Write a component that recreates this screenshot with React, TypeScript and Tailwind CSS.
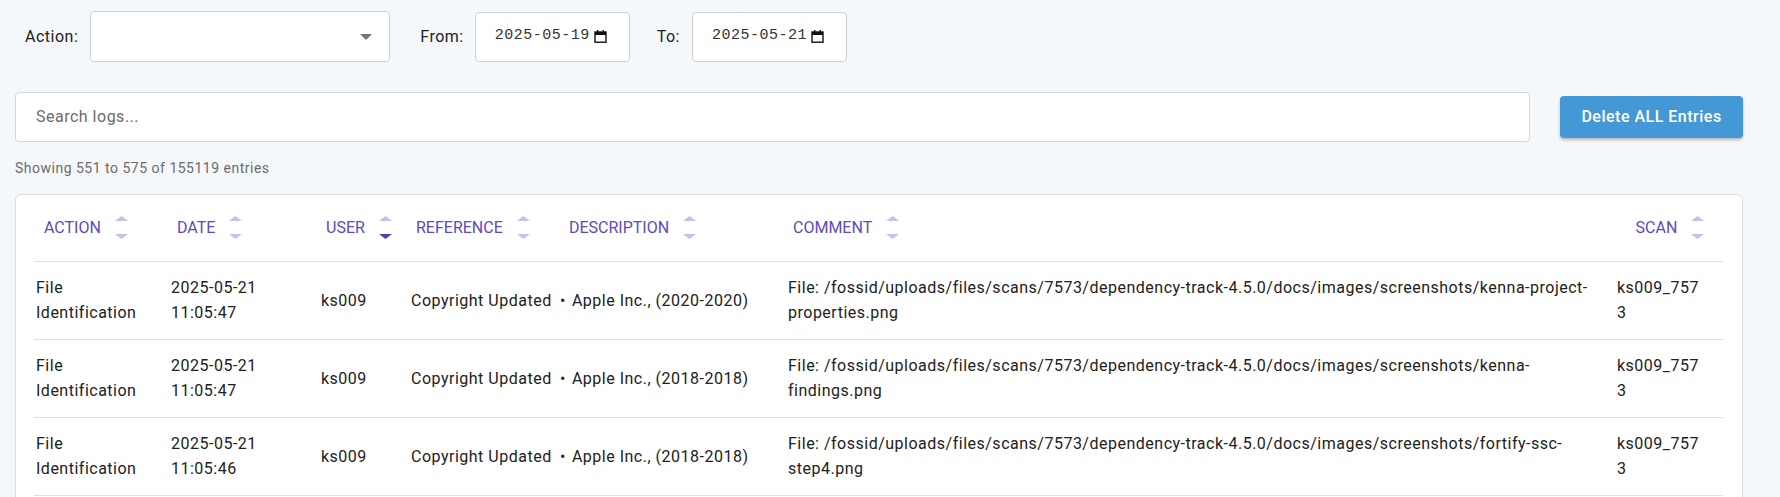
import React from 'react';

type Row = {
  action: string[];
  date: string;
  time: string;
  user: string;
  reference: string;
  description: string;
  comment: string;
  scan: string;
};

const base = 'File: /fossid/uploads/files/scans/7573/dependency-track-4.5.0/docs/images/screenshots/';

const rows: Row[] = [
  {
    action: ['File', 'Identification'],
    date: '2025-05-21',
    time: '11:05:47',
    user: 'ks009',
    reference: 'Copyright Updated',
    description: 'Apple Inc., (2020-2020)',
    comment: base + 'kenna-project-properties.png',
    scan: 'ks009_7573',
  },
  {
    action: ['File', 'Identification'],
    date: '2025-05-21',
    time: '11:05:47',
    user: 'ks009',
    reference: 'Copyright Updated',
    description: 'Apple Inc., (2018-2018)',
    comment: base + 'kenna-findings.png',
    scan: 'ks009_7573',
  },
  {
    action: ['File', 'Identification'],
    date: '2025-05-21',
    time: '11:05:46',
    user: 'ks009',
    reference: 'Copyright Updated',
    description: 'Apple Inc., (2018-2018)',
    comment: base + 'fortify-ssc-step4.png',
    scan: 'ks009_7573',
  },
];

const headers = [
  { label: 'ACTION', cls: 'w-[134px] pl-[10px]' },
  { label: 'DATE', cls: 'w-[149px] pl-[9px]' },
  { label: 'USER', cls: 'w-[90px] pl-[9px]', active: true },
  { label: 'REFERENCE', cls: 'w-[149px] pl-[9px]' },
  { label: 'DESCRIPTION', cls: 'w-[228px] pl-[13px]' },
  { label: 'COMMENT', cls: 'w-[829px] pl-[9px]' },
  { label: 'SCAN', cls: 'w-[110px] pl-[4px]', center: true },
];

function SortIcon({ active }: { active?: boolean }) {
  return (
    <svg width="13" height="23" viewBox="0 0 13 23" className="ml-[14px] shrink-0">
      <polygon points="0,5 6.5,0 13,5" fill="#c9bfe8" />
      <polygon points="0,18 13,18 6.5,23" fill={active ? '#5a3ea6' : '#c9bfe8'} />
    </svg>
  );
}

function CalendarIcon() {
  return (
    <svg width="13" height="13" viewBox="0 0 13 13" className="ml-[4px]">
      <rect x="1" y="2" width="11" height="10.2" fill="none" stroke="#111" strokeWidth="1.4" />
      <rect x="1" y="2" width="11" height="3" fill="#111" />
      <rect x="3" y="0" width="1.4" height="2.5" fill="#111" />
      <rect x="8.6" y="0" width="1.4" height="2.5" fill="#111" />
    </svg>
  );
}

function DateBox({ value }: { value: string }) {
  return (
    <div className="flex h-[50px] w-[155px] items-center rounded-[4px] border border-[#cfcfcf] bg-white pl-[19px]">
      <span className="font-['Liberation_Mono',monospace] text-[15px] text-[#333]">{value}</span>
      <CalendarIcon />
    </div>
  );
}

export default function App() {
  return (
    <div className="h-[497px] overflow-hidden bg-[#f5f8fb] font-['Roboto',sans-serif] text-[#212121]">
      <div className="ml-[15px] w-[1728px] pt-[11px]">
        <div className="flex h-[51px] items-center pl-[10px] text-[16px] tracking-[0.5px]">
          <span>Action:</span>
          <div className="relative ml-[12px] h-[51px] w-[300px] rounded-[4px] border border-[#cfcfcf] bg-white">
            <svg width="12" height="6" viewBox="0 0 12 6" className="absolute right-[17px] top-[22px]">
              <polygon points="0,0 12,0 6,6" fill="#757575" />
            </svg>
          </div>
          <span className="ml-[30px]">From:</span>
          <div className="ml-[11px]">
            <DateBox value="2025-05-19" />
          </div>
          <span className="ml-[27px]">To:</span>
          <div className="ml-[12px]">
            <DateBox value="2025-05-21" />
          </div>
        </div>

        <div className="mt-[30px] flex items-center">
          <div className="flex h-[50px] w-[1515px] items-center rounded-[4px] border border-[#d6d6d6] bg-white pl-[20px] text-[16px] tracking-[0.5px] text-[#6b6b6b]">
            Search logs...
          </div>
          <button className="ml-[30px] h-[42px] flex-1 rounded-[4px] bg-[#4598d6] text-[16px] font-medium tracking-[0.5px] text-white shadow-[0_2px_3px_rgba(0,0,0,0.25)]">
            Delete ALL Entries
          </button>
        </div>

        <div className="mt-[16px] text-[14px] leading-[20px] tracking-[0.5px] text-[#6b6b6b]">
          Showing 551 to 575 of 155119 entries
        </div>

        <div className="mt-[16px] rounded-[6px] border border-[#dcdcdc] bg-white pb-[40px] pl-[18px] pr-[19px]">
          <table className="w-[1689px] table-fixed border-collapse">
            <thead>
              <tr className="h-[66px] border-b border-[#e0e0e0]">
                {headers.map((h) => (
                  <th key={h.label} className={`${h.cls} align-middle font-normal`}>
                    <div
                      className={`flex items-center text-[16px] text-[#5b4bbd] ${h.center ? 'justify-center' : 'justify-start'}`}
                    >
                      <span>{h.label}</span>
                      <SortIcon active={h.active} />
                    </div>
                  </th>
                ))}
              </tr>
            </thead>
            <tbody className="text-[16px] leading-[25px] tracking-[0.5px]">
              {rows.map((r, i) => (
                <tr key={i} className="border-b border-[#e0e0e0]">
                  <td className="py-[13.5px] pl-[2px] align-middle">
                    {r.action[0]}
                    <br />
                    {r.action[1]}
                  </td>
                  <td className="py-[13.5px] pl-[3px] align-middle">
                    {r.date}
                    <br />
                    {r.time}
                  </td>
                  <td className="py-[13.5px] pl-[4px] align-middle">{r.user}</td>
                  <td className="whitespace-nowrap py-[13.5px] pl-[4px] align-middle">{r.reference}</td>
                  <td className="whitespace-nowrap py-[13.5px] pl-[4px] align-middle">
                    <span className="mr-[6px]">•</span>
                    {r.description}
                  </td>
                  <td className="py-[13.5px] pl-[4px] pr-[7px] align-middle">{r.comment}</td>
                  <td className="break-all py-[13.5px] pl-[4px] pr-[16px] align-middle">{r.scan}</td>
                </tr>
              ))}
            </tbody>
          </table>
        </div>
      </div>
    </div>
  );
}
